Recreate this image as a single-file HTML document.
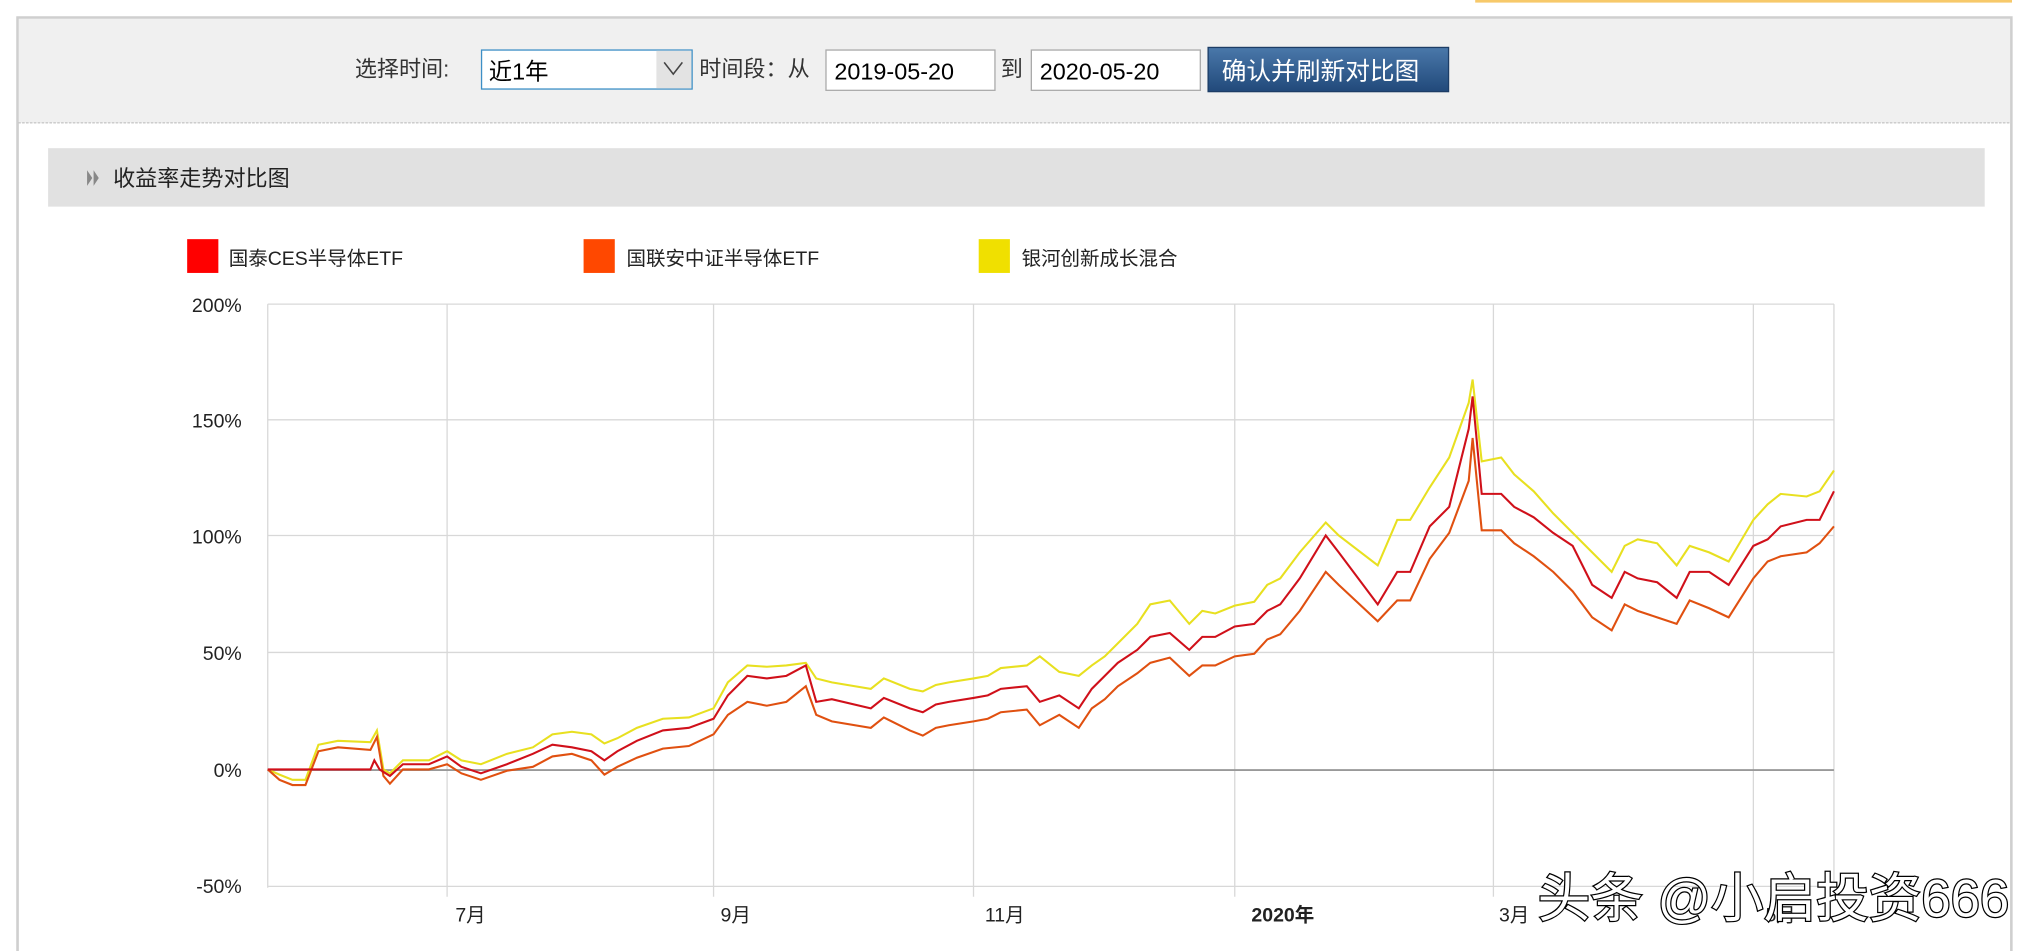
<!DOCTYPE html>
<html><head><meta charset="utf-8"><style>
html,body{margin:0;padding:0;background:#fff;overflow:hidden}
svg{display:block}
text{font-family:"Liberation Sans","Noto Sans CJK SC",sans-serif}
</style></head><body>
<svg width="2038" height="951" viewBox="0 0 1568 731.7" preserveAspectRatio="none" xmlns="http://www.w3.org/2000/svg">
<defs><linearGradient id="btn" x1="0" y1="0" x2="0" y2="1"><stop offset="0" stop-color="#4a78aa"/><stop offset="1" stop-color="#21497a"/></linearGradient></defs>
<rect x="1135" y="0" width="413" height="2" fill="#f7c96a"/>
<rect x="13.5" y="13.5" width="1534" height="730" fill="#fff" stroke="#cfcfcf" stroke-width="2"/>
<rect x="14.5" y="14.5" width="1532" height="80" fill="#f0f0f0"/>
<line x1="14" y1="94.5" x2="1547" y2="94.5" stroke="#c8c8c8" stroke-dasharray="2,1"/>
<text x="273" y="59" font-size="17" fill="#333">选择时间:</text>
<rect x="370.5" y="38.5" width="162" height="30" fill="#fff" stroke="#3d8fc6"/>
<rect x="505" y="39" width="27" height="29" fill="#e3e3e3"/>
<path d="M511 48 L518 57 L525 48" fill="none" stroke="#444" stroke-width="1.2"/>
<text x="376" y="61" font-size="18" fill="#000">近1年</text>
<text x="538" y="59" font-size="17" fill="#333">时间段：从</text>
<rect x="635.5" y="38.5" width="130" height="31" fill="#fff" stroke="#aaa"/>
<text x="642" y="61" font-size="18" fill="#000">2019-05-20</text>
<text x="770" y="59" font-size="17" fill="#333">到</text>
<rect x="793.5" y="38.5" width="130" height="31" fill="#fff" stroke="#aaa"/>
<text x="800" y="61" font-size="18" fill="#000">2020-05-20</text>
<rect x="929.5" y="36.5" width="185" height="34" fill="url(#btn)" stroke="#1d3d66"/>
<text x="940" y="61" font-size="19" fill="#fff">确认并刷新对比图</text>
<rect x="37" y="114" width="1490" height="45" fill="#e1e1e1"/>
<path d="M67 131 L71 137 L67 143 Z M72 131 L76 137 L72 143 Z" fill="#888"/>
<text x="87" y="143" font-size="17" fill="#222">收益率走势对比图</text>
<rect x="144" y="184" width="24" height="26" fill="#f00"/>
<text x="176" y="204" font-size="15" fill="#222">国泰CES半导体ETF</text>
<rect x="449" y="184" width="24" height="26" fill="#ff4800"/>
<text x="482" y="204" font-size="15" fill="#222">国联安中证半导体ETF</text>
<rect x="753" y="184" width="24" height="26" fill="#f0e000"/>
<text x="786" y="204" font-size="15" fill="#222">银河创新成长混合</text>
<g stroke="#d8d8d8" stroke-width="1">
<line x1="206" y1="234" x2="1411" y2="234"/><line x1="206" y1="323" x2="1411" y2="323"/><line x1="206" y1="412" x2="1411" y2="412"/><line x1="206" y1="502" x2="1411" y2="502"/><line x1="206" y1="682" x2="1411" y2="682"/>
<line x1="206" y1="234" x2="206" y2="683"/><line x1="344" y1="234" x2="344" y2="690"/><line x1="549" y1="234" x2="549" y2="690"/><line x1="749" y1="234" x2="749" y2="690"/><line x1="950" y1="234" x2="950" y2="690"/><line x1="1149" y1="234" x2="1149" y2="690"/><line x1="1349" y1="234" x2="1349" y2="690"/><line x1="1411" y1="234" x2="1411" y2="683"/>
</g>
<line x1="206" y1="592.5" x2="1411" y2="592.5" stroke="#999" stroke-width="1.5"/>
<g font-size="15" fill="#222" text-anchor="end">
<text x="186" y="240">200%</text><text x="186" y="329">150%</text><text x="186" y="418">100%</text><text x="186" y="508">50%</text><text x="186" y="598">0%</text><text x="186" y="687">-50%</text>
</g>
<g font-size="15" fill="#222" text-anchor="middle">
<text x="362" y="709">7月</text><text x="566" y="709">9月</text><text x="773" y="709">11月</text><text x="987" y="709" font-weight="bold">2020年</text><text x="1165" y="709">3月</text><text x="1370" y="709">5月</text>
</g>
<polyline fill="none" stroke="#e8e020" stroke-width="1.6" points="206,592 215,596 225,600 235,600 245,573 260,570 285,571 290,562 295,592 300,595 310,585 330,585 344,578 355,585 370,588 390,580 410,575 425,565 440,563 455,565 465,572 475,568 490,560 510,553 530,552 549,545 560,525 575,512 590,513 605,512 620,510 628,522 640,525 670,530 680,522 700,530 710,532 720,527 730,525 749,522 760,520 770,514 790,512 800,505 815,517 830,520 840,512 850,505 860,495 875,480 885,465 900,462 915,480 925,470 935,472 950,466 965,463 975,450 985,445 1000,425 1020,402 1030,412 1060,435 1075,400 1085,400 1100,375 1115,352 1130,310 1133,292 1140,355 1155,352 1165,365 1180,378 1195,395 1210,410 1225,425 1240,440 1250,420 1260,415 1275,418 1290,435 1300,420 1315,425 1330,432 1349,400 1360,388 1370,380 1390,382 1400,378 1411,362"/>
<polyline fill="none" stroke="#e05010" stroke-width="1.6" points="206,592 215,600 225,604 235,604 245,578 260,575 285,577 290,567 295,597 300,603 310,592 330,592 344,588 355,595 370,600 390,593 410,590 425,582 440,580 455,585 465,596 475,590 490,583 510,576 530,574 549,565 560,550 575,540 590,543 605,540 620,528 628,550 640,555 670,560 680,552 700,562 710,566 720,560 730,558 749,555 760,553 770,548 790,546 800,558 815,550 830,560 840,545 850,538 860,528 875,518 885,510 900,506 915,520 925,512 935,512 950,505 965,503 975,492 985,488 1000,470 1020,440 1030,450 1060,478 1075,462 1085,462 1100,430 1115,410 1130,370 1133,337 1140,408 1155,408 1165,418 1180,428 1195,440 1210,455 1225,475 1240,485 1250,465 1260,470 1275,475 1290,480 1300,462 1315,468 1330,475 1349,445 1360,432 1370,428 1390,425 1400,418 1411,405"/>
<polyline fill="none" stroke="#d0101a" stroke-width="1.6" points="206,592 285,592 288,585 292,592 300,597 310,588 330,588 344,582 355,590 370,595 390,588 410,580 425,573 440,575 455,578 465,585 475,578 490,570 510,562 530,560 549,553 560,535 575,520 590,522 605,520 620,512 628,540 640,538 670,545 680,537 700,545 710,548 720,542 730,540 749,537 760,535 770,530 790,528 800,540 815,535 830,545 840,530 850,520 860,510 875,500 885,490 900,487 915,500 925,490 935,490 950,482 965,480 975,470 985,465 1000,445 1020,412 1030,425 1060,465 1075,440 1085,440 1100,405 1115,390 1130,330 1133,305 1140,380 1155,380 1165,390 1180,398 1195,410 1210,420 1225,450 1240,460 1250,440 1260,445 1275,448 1290,460 1300,440 1315,440 1330,450 1349,420 1360,415 1370,405 1390,400 1400,400 1411,378"/>
<text x="1183" y="705" font-size="40.5" fill="#fff" stroke="#000" stroke-width="1.9" paint-order="stroke">头条 @小启投资666</text>
</svg>
</body></html>
